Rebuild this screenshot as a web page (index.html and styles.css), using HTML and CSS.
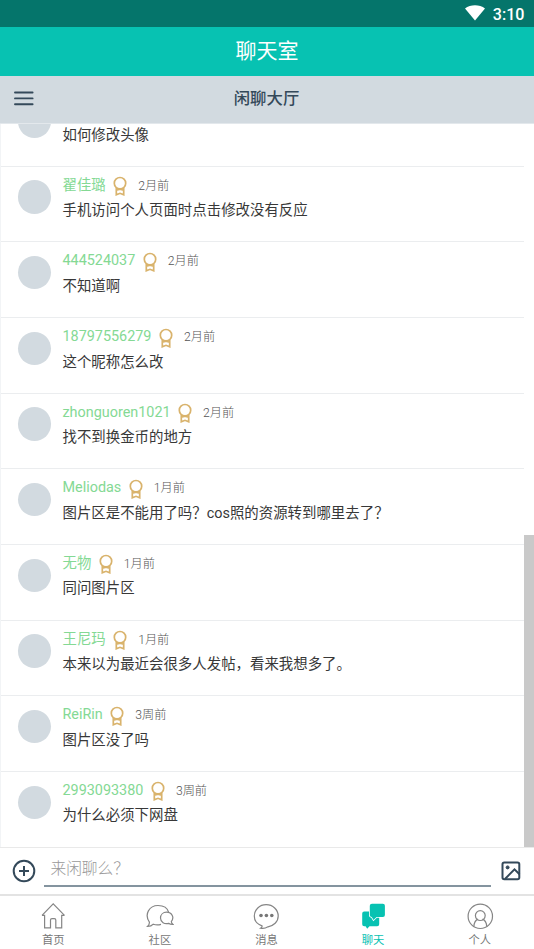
FILE: index.html
```html
<!DOCTYPE html>
<html lang="zh-CN">
<head>
<meta charset="utf-8">
<title>聊天室</title>
<link rel="stylesheet" href="styles.css">
</head>
<body>
<svg class="defs" width="0" height="0"><symbol id="medal" viewBox="0 0 14 20"><circle cx="7" cy="7.200" r="5.700"/><path d="M3.300 11.500v7.300L7 17.300l3.700 1.500v-7.300M3.300 14.200 7 13.200l3.700 1"/></symbol></svg>
<div class="status">
  <svg class="wifi" width="20" height="16" viewBox="0 0 20 16"><path d="M0 3.500C5.500-.9 14.500-.9 20 3.500L10 15.500Z"/></svg>
  <span>3:10</span>
</div>
<header class="title">聊天室</header>
<div class="room">
  <svg class="menu" width="20" height="15" viewBox="0 0 20 15"><path d="M1 1.500h17.600M1 7.400h17.600M1 13.300h17.600"/></svg>
  <span>闲聊大厅</span>
</div>
<main class="chat">
  <div class="list">
    <article class="row"><i class="avatar"></i><div class="body"><div class="meta"></div><p>如何修改头像</p></div></article>
    <article class="row"><i class="avatar"></i><div class="body"><div class="meta"><b>翟佳璐</b><svg class="medal"><use href="#medal"/></svg><time>2月前</time></div><p>手机访问个人页面时点击修改没有反应</p></div></article>
    <article class="row"><i class="avatar"></i><div class="body"><div class="meta"><b>444524037</b><svg class="medal"><use href="#medal"/></svg><time>2月前</time></div><p>不知道啊</p></div></article>
    <article class="row"><i class="avatar"></i><div class="body"><div class="meta"><b>18797556279</b><svg class="medal"><use href="#medal"/></svg><time>2月前</time></div><p>这个昵称怎么改</p></div></article>
    <article class="row"><i class="avatar"></i><div class="body"><div class="meta"><b>zhonguoren1021</b><svg class="medal"><use href="#medal"/></svg><time>2月前</time></div><p>找不到换金币的地方</p></div></article>
    <article class="row"><i class="avatar"></i><div class="body"><div class="meta"><b>Meliodas</b><svg class="medal"><use href="#medal"/></svg><time>1月前</time></div><p>图片区是不能用了吗？cos照的资源转到哪里去了？</p></div></article>
    <article class="row"><i class="avatar"></i><div class="body"><div class="meta"><b>无物</b><svg class="medal"><use href="#medal"/></svg><time>1月前</time></div><p>同问图片区</p></div></article>
    <article class="row"><i class="avatar"></i><div class="body"><div class="meta"><b>王尼玛</b><svg class="medal"><use href="#medal"/></svg><time>1月前</time></div><p>本来以为最近会很多人发帖，看来我想多了。</p></div></article>
    <article class="row"><i class="avatar"></i><div class="body"><div class="meta"><b>ReiRin</b><svg class="medal"><use href="#medal"/></svg><time>3周前</time></div><p>图片区没了吗</p></div></article>
    <article class="row"><i class="avatar"></i><div class="body"><div class="meta"><b>2993093380</b><svg class="medal"><use href="#medal"/></svg><time>3周前</time></div><p>为什么必须下网盘</p></div></article>
  </div>
  <div class="thumb"></div>
</main>
<div class="composer">
  <svg class="tool" width="24" height="24" viewBox="0 0 24 24"><circle cx="12" cy="12" r="10.300"/><path d="M12 7v10M7 12h10"/></svg>
  <div class="field">来闲聊么？</div>
  <svg class="tool" width="20" height="20" viewBox="0 0 20 20"><rect x="1.500" y="1.500" width="16.800" height="16.800" rx="1.800"/><circle class="dot" cx="6.600" cy="6.400" r="1.500"/><path d="M4 18 13.500 8.300l5 5"/></svg>
</div>
<nav class="tabs">
  <a class="tab"><svg width="28" height="28" viewBox="0 0 28 28"><path d="M3 13.300 14.200 1.900 25.500 13.300M3 13.300h2.600v12.500h5.900v-7.700q0-1.500 1.500-1.500h2.300q1.500 0 1.500 1.500v7.700h5.900V13.300h2.800"/></svg><span>首页</span></a>
  <a class="tab"><svg width="28" height="28" viewBox="0 0 28 28"><path d="M15 22.400c-2.800.8-5.600.6-7.700-.2-1.300 1.500-3 2.300-5.800 2.300 1.500-1.300 2-2.700 1.900-4.400C-2 12.300 3.300 3.500 12 3.500c5.300 0 9.500 2.700 10.600 6.700"/><path d="M20.600 10.200c-3.500 0-6.100 2.400-6.100 5.800 0 4.200 4.100 6.400 8 5.300 1 .8 2.200 1.300 4.500 1.200-1.200-.9-1.700-1.700-1.700-2.900C28.600 15.700 26.100 10.200 20.600 10.200Z"/></svg><span>社区</span></a>
  <a class="tab"><svg width="28" height="28" viewBox="0 0 28 28"><path d="M10 23.800C5.200 22.400 2.300 18.700 2.300 14 2.300 7.600 7.600 2.700 14.200 2.700S26.200 7.600 26.200 14c0 5.900-4.700 9.900-10.200 10.800-2.400 1.500-5 2-7.500 1.400 1.300-.8 2-1.400 1.500-2.400Z"/><g class="dots"><circle cx="9" cy="13.500" r="1.800"/><circle cx="14.400" cy="13.500" r="1.800"/><circle cx="19.800" cy="13.500" r="1.800"/></g></svg><span>消息</span></a>
  <a class="tab active"><svg width="28" height="28" viewBox="0 0 28 28"><path d="M5.200 9.500h13q2 0 2 2v10.700q0 2-2 2h-7.700l-2.300 2.600-1.600-2.600H5.200q-2 0-2-2V11.500q0-2 2-2Z"/><path class="front" d="M13 1.700h10.900q2 0 2 2v9.300q0 2-2 2h-6.300l-3.100 3-1.700-3q-2 0-2-2V3.700q0-2 2.200-2Z"/></svg><span>聊天</span></a>
  <a class="tab"><svg width="28" height="28" viewBox="0 0 28 28"><circle cx="14.300" cy="14.300" r="12.200"/><circle cx="14.300" cy="13.600" r="4.900"/><path d="M7.900 24.500c.2-3.900 1.600-6.400 4.200-7.400M20.700 24.500c-.2-3.900-1.600-6.400-4.200-7.400"/></svg><span>个人</span></a>
</nav>
</body>
</html>
```
FILE: styles.css
```css
* { box-sizing: border-box; }
body {
  margin: 0;
  width: 534px;
  height: 949px;
  overflow: hidden;
  display: flex;
  flex-direction: column;
  background: #fff;
  font-family: Roboto, "Noto Sans CJK SC", sans-serif;
}
svg { display: block; fill: none; flex: none; }
.defs { position: absolute; }
.status {
  height: 27px;
  flex: none;
  display: flex;
  justify-content: flex-end;
  align-items: center;
  gap: 8px;
  padding: 1px 9.500px 0 0;
  background: #05756b;
  color: #fff;
  font-size: 16.100px;
  font-weight: 500;
}
.status svg { fill: #fff; margin-top: -2px; }
.title {
  height: 49px;
  flex: none;
  background: #07c2b2;
  color: #fff;
  text-align: center;
  font-size: 21px;
  font-weight: 400;
  line-height: 49px;
}
.room {
  height: 48px;
  flex: none;
  position: relative;
  display: flex;
  justify-content: center;
  background: #d2dae0;
  border-bottom: 1px solid #e3e8ec;
  color: #34495a;
  font-size: 16.400px;
  font-weight: 500;
  line-height: 45px;
  padding-right: 1px;
}
.menu { position: absolute; left: 13.500px; top: 15px; stroke: #34495a; stroke-width: 1.900; stroke-linecap: round; }
.chat {
  height: 723px;
  flex: none;
  position: relative;
  overflow: hidden;
  display: flex;
  flex-direction: column;
  justify-content: flex-end;
  border-left: 1px solid #f2f4f6;
}
.list { flex: none; width: 523px; margin-bottom: -0.500px; }
.row {
  height: 75.650px;
  display: flex;
  padding: 0 0 0 17px;
  border-bottom: 1px solid #ebedef;
}
.row:last-child { border-bottom-color: transparent; }
.avatar {
  width: 33.300px;
  height: 33.300px;
  margin: 13.700px 11.200px 0 0;
  border-radius: 50%;
  background: #d2dae0;
  flex: none;
}
.body { padding-top: 7.500px; white-space: nowrap; }
.meta { display: flex; align-items: center; height: 23px; line-height: 22px; }
.meta b { font-size: 14.400px; font-weight: 400; color: #84d994; }
.medal { width: 14px; height: 20px; margin: 1px 11px 0 7.500px; stroke: #d9b36c; stroke-width: 1.700; }
time { font-size: 12.200px; font-weight: 300; color: #555; }
.row p { margin: 3px 0 0; font-size: 14.430px; line-height: 22px; color: #383838; }
.thumb { position: absolute; right: 0; top: 411px; width: 10px; bottom: 0; background: #c9c9c9; }
.composer {
  height: 49px;
  flex: none;
  display: flex;
  align-items: center;
  padding: 0 13px 0 11.500px;
  border-top: 1px solid #e9e9e9;
  border-bottom: 2px solid #e3e3e3;
}
.field {
  flex: 1;
  height: 32px;
  margin: 0 10px 0 8px;
  padding-left: 7px;
  border-bottom: 2px solid #84949f;
  color: #999;
  font-size: 15.700px;
  font-weight: 300;
  line-height: 28px;
}
.tool { stroke: #34495a; stroke-width: 2; }
.dot { fill: #34495a; stroke-width: 1; }
.tabs { flex: 1; display: grid; grid-template-columns: repeat(5, 1fr); margin-right: 1px; }
.tab {
  display: flex;
  flex-direction: column;
  align-items: center;
  padding-top: 6px;
  color: #777;
  font-size: 11.300px;
  line-height: 21px;
}
.tab svg { stroke: #858585; stroke-width: 1.200; }
.tab .dots { fill: #777; stroke: none; }
.active { color: #07c2b2; }
.active svg { fill: #07c2b2; stroke: none; }
.active .front { stroke: #fff; stroke-width: 1.600; paint-order: stroke; }
```
